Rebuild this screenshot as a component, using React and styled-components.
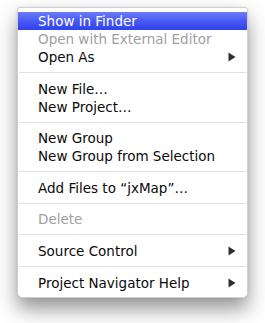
import React from "react";
import styled, { createGlobalStyle } from "styled-components";

const Global = createGlobalStyle`
  html, body { margin: 0; padding: 0; background: #ffffff; }
  body { font-family: "DejaVu Sans", "Liberation Sans", sans-serif; }
`;

const Page = styled.div`
  padding: 7px 0 0 17px;
  width: 265px;
  height: 323px;
  box-sizing: border-box;
`;

const Menu = styled.ul`
  list-style: none;
  margin: 0;
  padding: 4px 0 5px;
  width: 231px;
  box-sizing: border-box;
  background: #ffffff;
  border: 1px solid #d0d0d0;
  border-radius: 3px 3px 5px 5px;
  box-shadow: 0 11px 20px rgba(0, 0, 0, 0.42), 0 0 3px rgba(0, 0, 0, 0.1);
`;

const Item = styled.li`
  display: flex;
  align-items: center;
  justify-content: space-between;
  height: 18px;
  padding: 0 11px 0 20px;
  font-size: 13.5px;
  line-height: 18px;
  white-space: nowrap;
  color: ${(p) => (p.$highlighted ? "#ffffff" : p.$disabled ? "#a0a0a0" : "#0a0a0a")};
  background: ${(p) =>
    p.$highlighted ? "linear-gradient(to bottom, #6d7cf8 0%, #4859f3 50%, #3042ec 100%)" : "transparent"};
`;

const Separator = styled.li`
  height: 1px;
  margin: 6px 1px 6.6px;
  background: #e0e0e0;
`;

const Arrow = styled.svg`
  width: 8px;
  height: 10px;
  flex: none;
`;

const Submenu = () => (
  <Arrow viewBox="0 0 8 10">
    <polygon points="0.5,0.5 7.5,5 0.5,9.5" fill="#2e2e2e" />
  </Arrow>
);

const groups = [
  [
    { label: "Show in Finder", highlighted: true },
    { label: "Open with External Editor", disabled: true },
    { label: "Open As", submenu: true },
  ],
  [{ label: "New File…" }, { label: "New Project…" }],
  [{ label: "New Group" }, { label: "New Group from Selection" }],
  [{ label: "Add Files to “jxMap”…" }],
  [{ label: "Delete", disabled: true }],
  [{ label: "Source Control", submenu: true }],
  [{ label: "Project Navigator Help", submenu: true }],
];

export default function App() {
  return (
    <Page>
      <Global />
      <Menu>
        {groups.map((g, gi) => (
          <React.Fragment key={gi}>
            {gi > 0 && <Separator />}
            {g.map((it) => (
              <Item key={it.label} $highlighted={it.highlighted} $disabled={it.disabled}>
                <span>{it.label}</span>
                {it.submenu && <Submenu />}
              </Item>
            ))}
          </React.Fragment>
        ))}
      </Menu>
    </Page>
  );
}
